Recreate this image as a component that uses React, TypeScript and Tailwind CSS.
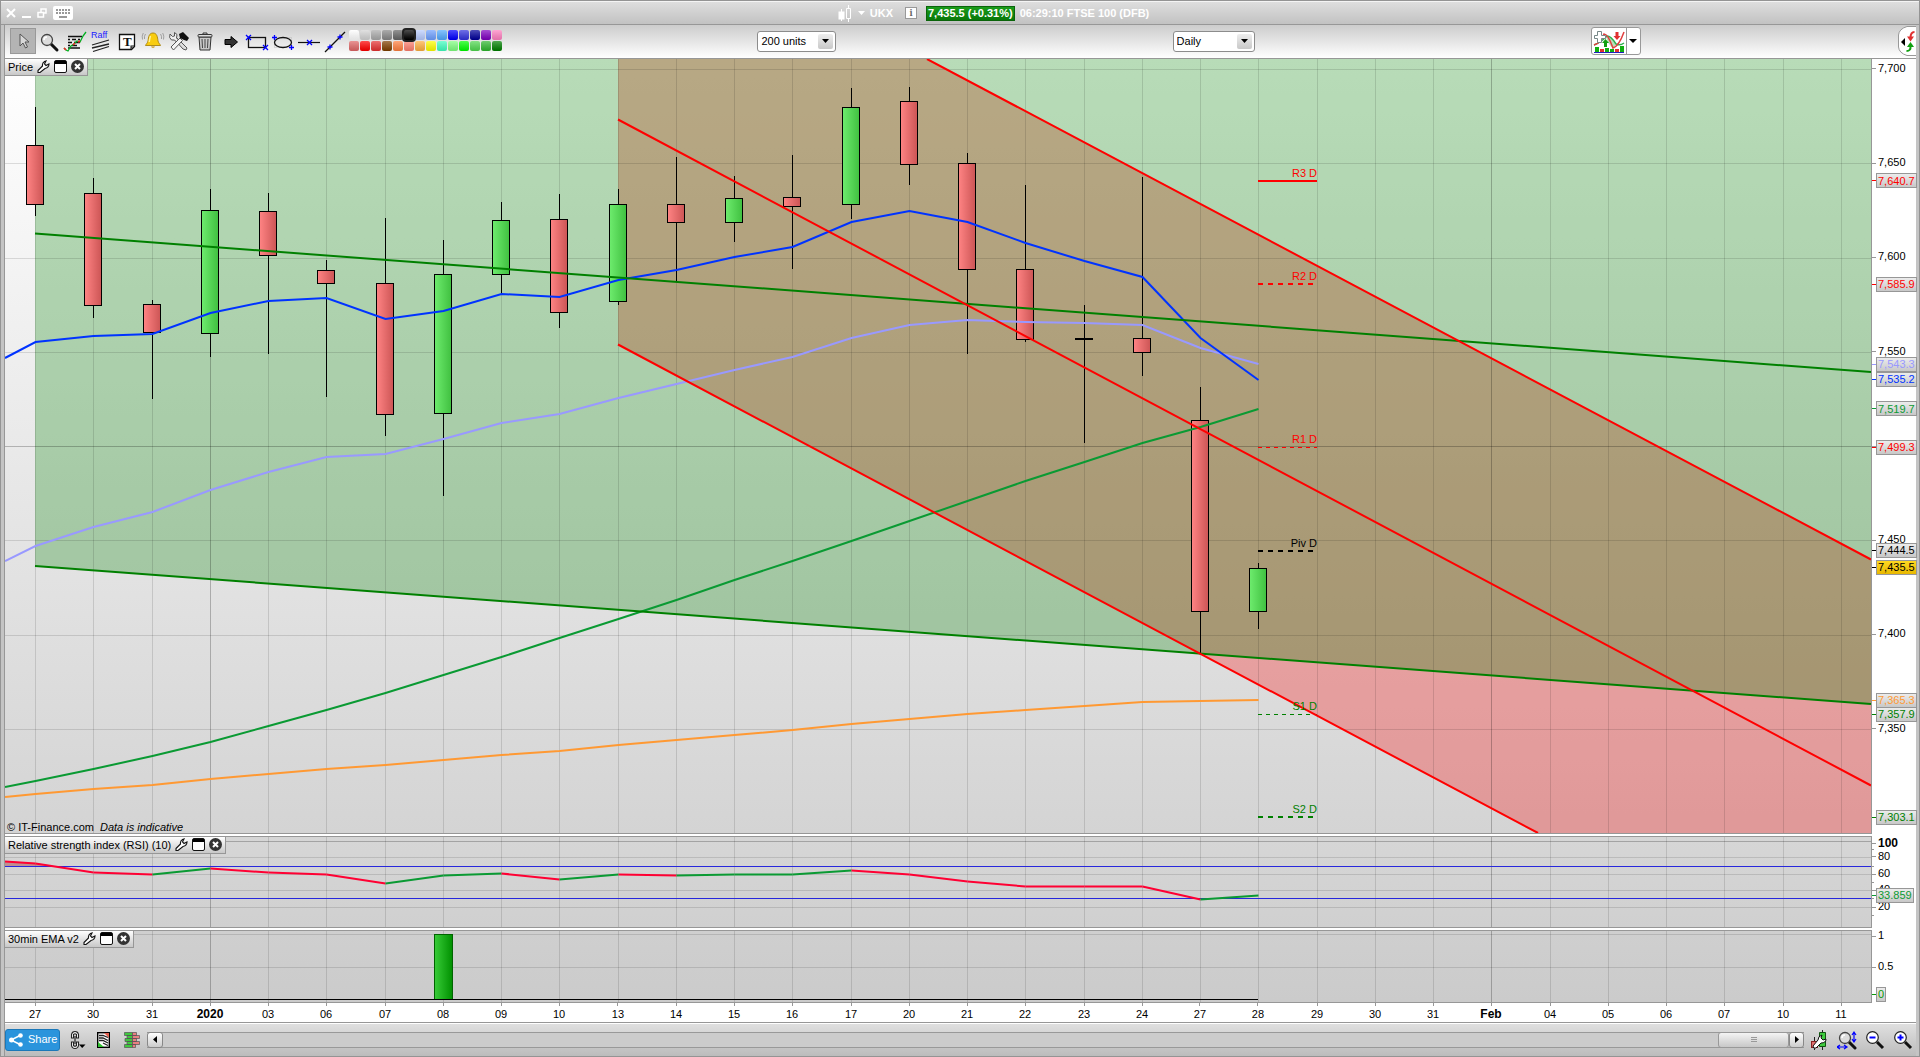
import React from 'react';
import { clsx } from 'clsx';

// Plot coordinates: every panel shares the same horizontal axis.
const LEFT = 5;
const WIDTH = 1866;
const PRICE_TOP = 59;
const PRICE_HEIGHT = 774;

const dates = [
    '27', '30', '31', '2020', '03', '06', '07', '08', '09', '10', '13', '14', '15', '16', '17', '20',
    '21', '22', '23', '24', '27', '28', '29', '30', '31', 'Feb', '04', '05', '06', '07', '10', '11',
];

const colX = (i: number) => Math.round(35.1 + 58.25 * i);
const priceY = (price: number) => 69 + (7700 - price) * 1.8855;
const pctX = (x: number) => `${((x - LEFT) / WIDTH) * 100}%`;
const isMajor = (label: string) => label === '2020' || label === 'Feb';

// high, body top, body bottom, low
type Candle = { y: [number, number, number, number]; up?: boolean };

const candles: Candle[] = [
    { y: [107, 145, 204, 216] },
    { y: [178, 193, 305, 318] },
    { y: [300, 304, 332, 399] },
    { y: [189, 210, 333, 357], up: true },
    { y: [193, 211, 255, 354] },
    { y: [260, 270, 283, 397] },
    { y: [218, 283, 414, 436] },
    { y: [240, 274, 413, 496], up: true },
    { y: [202, 220, 274, 295], up: true },
    { y: [194, 219, 312, 328] },
    { y: [189, 204, 301, 305], up: true },
    { y: [157, 204, 222, 281] },
    { y: [176, 198, 222, 242], up: true },
    { y: [155, 197, 206, 269] },
    { y: [88, 107, 204, 219], up: true },
    { y: [87, 101, 164, 185] },
    { y: [153, 163, 269, 354] },
    { y: [185, 269, 339, 342] },
    { y: [305, 338, 339, 443] },
    { y: [177, 338, 352, 376] },
    { y: [387, 420, 611, 653] },
    { y: [563, 568, 611, 629], up: true },
];

// first value sits on the left edge, the rest on the date columns
const averages = [
    { color: '#ff9933', y: [797, 794, 789, 785, 779, 774, 769, 765, 760, 755, 751, 745, 740, 735, 730, 724, 719, 714, 710, 706, 702, 701, 700] },
    { color: '#0a9a33', y: [787, 781, 769, 756, 742, 726, 710, 693, 675, 657, 638, 619, 600, 580, 561, 541, 521, 501, 481, 462, 443, 427, 409] },
    { color: '#9999ff', y: [561, 546, 527, 512, 490, 472, 457, 454, 439, 423, 414, 398, 384, 370, 357, 338, 325, 320, 322, 323, 325, 348, 364] },
    { color: '#0033ff', y: [358, 342, 336, 334, 313, 301, 298, 319, 311, 294, 297, 280, 270, 257, 247, 222, 211, 222, 243, 261, 277, 338, 380] },
];

const rsi = [861, 863, 872, 874, 868, 872, 874, 883, 875, 873, 879, 874, 875, 874, 874, 870, 874, 881, 886, 886, 886, 899, 895];
const rsiRising = [3, 7, 8, 10, 12, 13, 14, 21];

const priceMarks = [7700, 7650, 7600, 7550, 7500, 7450, 7400, 7350];

const priceTags = [
    { value: '7,640.7', text: 'text-[#ff0000]', tick: 'bg-[#ff0000]' },
    { value: '7,585.9', text: 'text-[#ff0000]', tick: 'bg-[#ff0000]' },
    { value: '7,543.3', text: 'text-[#9999ff]', tick: 'bg-[#9999ff]' },
    { value: '7,535.2', text: 'text-[#0033ff]', tick: 'bg-[#0033ff]' },
    { value: '7,519.7', text: 'text-[#0a9a33]', tick: 'bg-[#0a9a33]' },
    { value: '7,499.3', text: 'text-[#ff0000]', tick: 'bg-[#ff0000]' },
    { value: '7,444.5', text: 'text-black', tick: 'bg-black' },
    { value: '7,435.5', text: 'text-black', tick: 'bg-black', last: true },
    { value: '7,365.3', text: 'text-[#ff9933]', tick: 'bg-[#ff9933]' },
    { value: '7,357.9', text: 'text-[#008000]', tick: 'bg-[#008000]' },
    { value: '7,303.1', text: 'text-[#008000]', tick: 'bg-[#008000]' },
];

const pivots = [
    { name: 'R3 D', price: 7640.7, color: '#ff0000', text: 'text-[#ff0000]', width: 2 },
    { name: 'R2 D', price: 7585.9, color: '#ff0000', text: 'text-[#ff0000]', width: 2, dash: '5 5' },
    { name: 'R1 D', price: 7499.3, color: '#ff0000', text: 'text-[#ff0000]', width: 1, dash: '4 4' },
    { name: 'Piv D', price: 7444.5, color: '#000000', text: 'text-black', width: 2, dash: '5 5' },
    { name: 'S1 D', price: 7357.9, color: '#008000', text: 'text-[#008000]', width: 1, dash: '4 4' },
    { name: 'S2 D', price: 7303.1, color: '#008000', text: 'text-[#008000]', width: 2, dash: '5 5' },
];

const palette = [
    { name: 'White', bg: 'bg-white' },
    { name: 'Light gray', bg: 'bg-[#d4d4d4]' },
    { name: 'Gray', bg: 'bg-[#aaaaaa]' },
    { name: 'Medium gray', bg: 'bg-[#888888]' },
    { name: 'Dark gray', bg: 'bg-[#666666]' },
    { name: 'Black', bg: 'bg-black' },
    { name: 'Pale blue', bg: 'bg-[#b8ccff]' },
    { name: 'Light blue', bg: 'bg-[#6ea0ff]' },
    { name: 'Sky blue', bg: 'bg-[#52aaff]' },
    { name: 'Blue', bg: 'bg-[#0000ff]' },
    { name: 'Royal blue', bg: 'bg-[#3333dd]' },
    { name: 'Navy', bg: 'bg-[#000099]' },
    { name: 'Purple', bg: 'bg-[#8000c0]' },
    { name: 'Pink', bg: 'bg-[#ff80c0]' },
    { name: 'Rose', bg: 'bg-[#e06666]' },
    { name: 'Red', bg: 'bg-[#ff0000]' },
    { name: 'Brick', bg: 'bg-[#e63333]' },
    { name: 'Brown', bg: 'bg-[#804000]' },
    { name: 'Orange', bg: 'bg-[#ff8040]' },
    { name: 'Salmon', bg: 'bg-[#ff8070]' },
    { name: 'Amber', bg: 'bg-[#ffb040]' },
    { name: 'Yellow', bg: 'bg-[#ffff00]' },
    { name: 'Turquoise', bg: 'bg-[#40ffc0]' },
    { name: 'Light green', bg: 'bg-[#80ff80]' },
    { name: 'Lime', bg: 'bg-[#00ff00]' },
    { name: 'Fern', bg: 'bg-[#50d850]' },
    { name: 'Grass', bg: 'bg-[#30b830]' },
    { name: 'Green', bg: 'bg-[#008000]' },
];

const Cross = ({ x, y, plus }: { x: number; y: number; plus?: boolean }) => (
    <path
        d={plus ? `M${x - 2.5} ${y}h5M${x} ${y - 2.5}v5` : `M${x - 2.5} ${y - 2.5}l5 5m0 -5l-5 5`}
        stroke="#0000ff"
        strokeWidth="1.3"
    />
);

const Glass = () => (
    <>
        <path d="M12 12l6 6" stroke="#111" strokeWidth="3" strokeLinecap="round" />
        <circle cx="8" cy="8" r="5.5" fill="#dcdcdc" stroke="#444" strokeWidth="1.3" />
        <path d="M5 8a3 3 0 0 1 3-3" stroke="#fff" strokeWidth="1.5" />
    </>
);

const tools: { label: string; icon: React.ReactNode }[] = [
    {
        label: 'Select',
        icon: <path d="M8 4v12l3-3 2.5 5 2-1-2.5-5h4z" fill="#d8d8d8" stroke="#555" />,
    },
    { label: 'Zoom', icon: <g transform="translate(1 2)"><Glass /></g> },
    {
        label: 'Indicators',
        icon: (
            <>
                <path d="M4 6.5h14M4 9.5h2m2 0h4m2 0h2M4 12.5h4m2 0h6M4 15.5h2m2 0h5M4 18h12" stroke="#111" strokeWidth="1.3" />
                <path d="M0 18l2 2 2 1 3-5 3-2 3-3 3 1 3-6 3-4" stroke="#00b020" strokeWidth="1.3" />
                <path d="M0 18l2 2M9 15l2-2m3-1l2-1" stroke="#f02020" strokeWidth="1.5" />
            </>
        ),
    },
    {
        label: 'Raff channel',
        icon: (
            <>
                <text x="1" y="8" fontSize="9" fill="#1a1aff" fontFamily="Liberation Sans, Arial, sans-serif">Raff</text>
                <path d="M2 15l17-5M2 18l17-4M3 21.5l16-5" stroke="#222" strokeWidth="1.3" />
            </>
        ),
    },
    {
        label: 'Text',
        icon: (
            <>
                <path d="M3.5 4.500h15v12l-3 3h-12z" fill="#fff" stroke="#111" strokeWidth="1.3" />
                <path d="M18.5 15.5h-4v4z" fill="#111" />
                <path d="M15.500 17.5v-1h2z" fill="#fff" />
                <text x="7" y="16" fontSize="13" fontWeight="bold" fill="#111" fontFamily="Liberation Serif, Times New Roman, serif">T</text>
            </>
        ),
    },
    {
        label: 'Alert',
        icon: (
            <>
                <path d="M11 3c-4 0-4.5 4-5 8-.4 2-2 3-2.5 4.500h15c-.5-1.5-2-2.500-2.500-4.500-.5-4-1-8-5-8z" fill="#f8cc10" stroke="#a07800" strokeWidth=".8" />
                <path d="M8.5 6c-.8 2-1 4-1.3 6" stroke="#fff3a0" strokeWidth="1.5" />
                <path d="M9 16.5a2.2 2.2 0 0 0 4 0z" fill="#c89000" />
                <path d="M3.5 4Q2 6 2.5 9M1.3 3Q-.5 6 .5 9.5M18.500 4Q20 6 19.500 9M20.700 3Q22.500 6 21.500 9.500" stroke="#999" strokeWidth=".9" />
            </>
        ),
    },
    {
        label: 'Drawing settings',
        icon: (
            <>
                <path d="M6 9l9 10 3 1 1-2L9 8z" fill="#ddd" stroke="#555" />
                <path d="M2 4q-1.500 4 1.500 6h3l2 2 2-2-2-2 .5-3.500L6.500 2.500V6L4.500 6.500z" fill="#eee" stroke="#555" />
                <path d="M12 8l-9 9 2.500 3 9-9.500z" fill="#f4f4f4" stroke="#555" />
                <path d="M11 4l4-2 6 6-2 3-3-1-4-2z" fill="#111" />
            </>
        ),
    },
    {
        label: 'Delete',
        icon: (
            <>
                <path d="M5 7h12l-1 13H6z" fill="#c8c8c8" stroke="#333" />
                <path d="M8 9l.5 9M11 9v9M14 9l-.5 9" stroke="#444" />
                <rect x="4" y="4.5" width="14" height="2.5" rx="1" fill="#ddd" stroke="#333" />
                <path d="M9 4V3h4v1" stroke="#333" />
            </>
        ),
    },
    {
        label: 'Arrow',
        icon: <path d="M5 9.500h6V6.500l6.500 5.500-6.500 5.500v-3H5z" fill="#333" stroke="#000" />,
    },
    {
        label: 'Rectangle',
        icon: (
            <>
                <rect x="2.5" y="7.5" width="17" height="10" stroke="#111" strokeWidth="1.3" />
                <Cross x={2.5} y={7.5} />
                <Cross x={19.5} y={17.5} />
            </>
        ),
    },
    {
        label: 'Ellipse',
        icon: (
            <>
                <rect x="2.5" y="7.5" width="17" height="10" stroke="#aaa" strokeDasharray="1 1" strokeWidth=".7" />
                <ellipse cx="11" cy="12.5" rx="8.5" ry="5" stroke="#111" strokeWidth="1.3" />
                <Cross x={2.5} y={7.5} plus />
                <Cross x={19.5} y={17.5} plus />
            </>
        ),
    },
    {
        label: 'Horizontal line',
        icon: (
            <>
                <path d="M0 12.5h22" stroke="#111" strokeWidth="1.2" />
                <Cross x={11.5} y={12.5} />
            </>
        ),
    },
    {
        label: 'Trend line',
        icon: (
            <>
                <path d="M1 22L21 2" stroke="#111" strokeWidth="1.2" />
                <Cross x={6} y={17} plus />
                <Cross x={16} y={7} plus />
            </>
        ),
    },
];

const TitleBar = () => (
    <header className="relative flex h-6 shrink-0 items-center justify-center border-t border-b border-t-[#f4f4f4] border-b-[#979797] bg-linear-to-b from-[#dedede] to-[#c2c2c2] text-[11px] font-bold text-white">
        <div className="absolute inset-y-0 left-[5px] flex items-center gap-[6px]">
            <button aria-label="Close window">
                <svg width="10" height="10" fill="none" stroke="#fff" strokeWidth="2"><path d="M1 1l8 8M9 1l-8 8" /></svg>
            </button>
            <button aria-label="Minimize window">
                <svg width="9" height="10" fill="none" stroke="#fff" strokeWidth="2"><path d="M0 9h9" /></svg>
            </button>
            <button aria-label="Restore window">
                <svg width="10" height="10" fill="none" stroke="#fff" strokeWidth="1.5"><path d="M4 4V1h5v4H7M1 4.5h5.5V9H1z" /></svg>
            </button>
            <button aria-label="Keyboard">
                <svg width="20" height="14">
                    <rect width="20" height="14" rx="2" fill="#fff" />
                    <path d="M3 4h14M3 7h14" stroke="#999" strokeWidth="2" strokeDasharray="2 1" />
                    <path d="M6 11h8" stroke="#999" strokeWidth="2" />
                </svg>
            </button>
        </div>
        <div className="flex items-center pl-[67px]">
            <svg width="16" height="18" fill="none" stroke="#fff">
                <path d="M3.5 5v12M10.5 1v3M10.5 15v3" />
                <rect x="1" y="8" width="5" height="7" fill="#fff" />
                <path d="M8.5 4.5h4v10h-4z" />
            </svg>
            <svg className="ml-1" width="8" height="5"><path d="M0 0h7L3.5 4z" fill="#fff" /></svg>
            <span className="ml-1">UKX</span>
            <span className="ml-3 flex h-3 w-3 items-center justify-center border border-[#999] bg-white font-serif text-[10px] leading-none text-[#666]">i</span>
            <span className="ml-[9px] flex h-[15px] items-center border border-[#0a640a] bg-linear-to-b from-[#1a9c1a] to-[#087808] px-px">7,435.5 (+0.31%)</span>
            <span className="ml-[5px]">06:29:10</span>
            <span className="ml-[3px]">FTSE 100 (DFB)</span>
        </div>
    </header>
);

const Dropdown = ({ id, label, value, width }: { id: string; label: string; value: string; width: string }) => (
    <div className={clsx('relative', width)}>
        <label htmlFor={id} className="sr-only">{label}</label>
        <select id={id} defaultValue={value} className="block h-[21px] w-full appearance-none rounded-[3px] border border-[#8c8c8c] bg-white pl-[3px] text-[11px] leading-[15px] text-black">
            <option>{value}</option>
        </select>
        <span className="pointer-events-none absolute inset-y-[3px] right-[3px] flex w-[15px] items-center justify-center rounded-xs bg-linear-to-b from-[#eeeeee] to-[#c8c8c8]">
            <svg width="7" height="4"><path d="M0 0h7L3.5 4z" /></svg>
        </span>
    </div>
);

const Toolbar = () => (
    <div className="grid h-[34px] shrink-0 grid-cols-[752fr_415fr_418fr_325fr] items-center border-b border-[#979797] bg-linear-to-b from-[#cccccc] to-white pb-px">
        <div className="flex items-center pb-px pl-[5px]">
            {tools.map((tool, i) => (
                <button
                    key={tool.label}
                    aria-label={tool.label}
                    className={clsx('flex h-[26px] w-[26px] items-center justify-center', i === 0 && 'border border-[#999] bg-[#b4b4b4]')}
                >
                    <svg width="22" height="22" viewBox="0 0 22 22" fill="none" className="shrink-0 overflow-visible">{tool.icon}</svg>
                </button>
            ))}
            <div className="ml-px grid grid-cols-14 gap-px">
                {palette.map((c) => (
                    <button
                        key={c.name}
                        aria-label={c.name}
                        className={clsx('h-[10px] w-[10px] rounded-xs bg-linear-to-b from-white/30 to-black/10', c.bg, c.name === 'Black' && 'relative ring-2 ring-[#222]')}
                    />
                ))}
            </div>
        </div>
        <Dropdown id="units" label="Units" value="200 units" width="w-[79px]" />
        <Dropdown id="timeframe" label="Time frame" value="Daily" width="w-[82px]" />
        <div className="flex items-center justify-between">
            <div className="flex h-7 w-[50px] overflow-hidden rounded-[3px] border border-[#999] bg-white">
                <button aria-label="Add indicator" className="flex w-[35px] items-center justify-center border-r border-[#999]">
                    <svg width="32" height="24" viewBox="0 0 32 24" fill="none">
                        <path d="M13 8q6 0 10 8l-3 3q-4-2-7-11z" fill="#b8e0b8" />
                        <path d="M1 16Q7 14 14 7q4 0 9 8 4 2 8-1" stroke="#30b050" strokeWidth="1.5" />
                        <path d="M1 16Q8 14 11 5q4 0 9 14 6-2 11-16" stroke="#e04040" strokeWidth="1.5" />
                        <path d="M4.5 2.5h4v4h4v3h-4v4h-4v-4h-3v-3h3z" fill="#fff" stroke="#788" />
                        <path d="M22.500 3v4h-2l3.500 4 3.500-4h-2V3z" fill="#e03030" />
                        <path d="M11 18v-4H9l3.500-4 3.500 4h-2v4z" fill="#10a010" />
                        <path d="M2 18h4v5H2zM12 19h4v4h-4zM17 20h4v3h-4zM27 17h4v6h-4z" fill="#10b010" />
                        <path d="M7 20h4v3H7zM22 20h4v3h-4z" fill="#e03030" />
                        <path d="M1 23.5h30" stroke="#2020c0" />
                    </svg>
                </button>
                <button aria-label="More indicators" className="flex flex-1 items-center justify-center">
                    <svg width="8" height="4"><path d="M0 0h8L4 4z" /></svg>
                </button>
            </div>
            <button aria-label="Open order panel">
                <svg width="18" height="30" fill="none">
                    <path d="M18 .5H9Q1 3 .5 9v12q.5 6 8.500 8.500h9" fill="#fff" stroke="#999" />
                    <path d="M7 12v8l-4-4z" fill="#000" />
                    <path d="M16.500 6q-4 0-4 6" stroke="#e03030" strokeWidth="2" />
                    <path d="M9 10.500h7l-3.500 5z" fill="#e03030" />
                    <path d="M8.500 25q4.500 0 4-5" stroke="#10a010" strokeWidth="2" />
                    <path d="M9 21h7l-3.500-5z" fill="#10a010" />
                </svg>
            </button>
        </div>
    </div>
);

const PanelTab = ({ title }: { title: string }) => (
    <div className="absolute top-0 left-0 flex h-[17px] items-center border-r border-b border-[#979797] bg-linear-to-b from-white to-[#c8c8c8] pr-[3px] pb-px pl-[3px]">
        <h2 className="text-[11px] leading-[14px] whitespace-nowrap">{title}</h2>
        <button aria-label={`${title} settings`} className="ml-1">
            <svg width="13" height="13" fill="none">
                <path d="M1 10.5l4.500-4.500q-.5-3 2-4.500l1.500-.5-1.500 3 1.500 1.500 3-1.500q0 3.500-4 4.500L3 12.500H1z" fill="#fff" stroke="#111" strokeWidth="1.1" />
            </svg>
        </button>
        <button aria-label={`Detach ${title}`} className="ml-1">
            <svg width="13" height="13"><rect x=".5" y=".5" width="12" height="12" rx="1.5" fill="#fff" stroke="#111" /><path d="M1 1h11v3H1z" /></svg>
        </button>
        <button aria-label={`Close ${title}`} className="ml-1">
            <svg width="13" height="13"><circle cx="6.5" cy="6.5" r="6.5" fill="#333" /><path d="M4 4l5 5M9 4l-5 5" stroke="#fff" strokeWidth="2" /></svg>
        </button>
    </div>
);

const Grid = ({ top, height, lines, strong }: { top: number; height: number; lines: number[]; strong?: number }) => (
    <g shapeRendering="crispEdges" stroke="#000">
        {dates.map((d, i) => (
            <path key={i} d={`M${colX(i) + 0.5} ${top}v${height}`} strokeOpacity={isMajor(d) ? 0.24 : 0.12} />
        ))}
        {lines.map((y) => (
            <path key={y} d={`M${LEFT} ${y + 0.5}h${WIDTH}`} strokeOpacity={y === strong ? 0.24 : 0.12} />
        ))}
    </g>
);

const linePath = (ys: number[]) => ys.map((y, i) => `${i ? 'L' : 'M'}${i ? colX(i - 1) + 0.5 : LEFT} ${y}`).join('');

const Tag = ({ y, top, height, text, tick, children, last }: {
    y: number; top: number; height: number; text: string; tick: string; children: React.ReactNode; last?: boolean;
}) => (
    <div className="absolute left-0 flex h-0 items-center" style={{ top: `${((y - top) / height) * 100}%` }}>
        <span className={clsx('h-px w-1 shrink-0', tick)} />
        <span className={clsx('flex h-[15px] items-center border border-[#979797] bg-linear-to-b px-px text-[11px]', text, last ? 'from-[#ffd820] to-[#e8b800]' : 'from-[#ececec] to-[#c8c8c8]')}>
            {children}
        </span>
    </div>
);

const Mark = ({ y, top, height, children, bold }: {
    y: number; top: number; height: number; children: React.ReactNode; bold?: boolean;
}) => (
    <div className="absolute left-0 flex h-0 items-center" style={{ top: `${((y - top) / height) * 100}%` }}>
        <span className="h-px w-1 shrink-0 bg-[#979797]" />
        <span className={clsx('pl-[2px]', bold ? 'text-xs font-bold' : 'pb-[2px] text-[11px]')}>{children}</span>
    </div>
);

const PricePanel = () => (
    <section className="flex min-h-0 flex-1">
        <div className="relative flex-1 border-r border-b border-[#979797] bg-linear-to-b from-white to-[#d4d4d4]">
            <svg className="absolute inset-0 h-full w-full" viewBox={`${LEFT} ${PRICE_TOP} ${WIDTH} ${PRICE_HEIGHT}`} preserveAspectRatio="none" fill="none">
                <defs>
                    <linearGradient id="up"><stop stopColor="#6eec6e" /><stop offset="1" stopColor="#40c040" /></linearGradient>
                    <linearGradient id="down"><stop stopColor="#ff8484" /><stop offset="1" stopColor="#cc5555" /></linearGradient>
                </defs>
                <path d="M618 59H927L1871 559.5V833H1538L618 344.5z" fill="#ff0000" fillOpacity=".28" />
                <path d="M35 59H1871V704L35 566z" fill="#008000" fillOpacity=".28" />
                <Grid top={PRICE_TOP} height={PRICE_HEIGHT} lines={[69, 163, 258, 352, 446, 540, 635, 729]} strong={446} />

                {candles.map(({ y: [high, top, bottom, low], up }, i) => (
                    <g key={i} shapeRendering="crispEdges" stroke="#000">
                        <path d={`M${colX(i) + 0.5} ${high}V${low}`} />
                        <rect x={colX(i) - 8.5} y={top + 0.5} width="17" height={bottom - top} fill={up ? 'url(#up)' : 'url(#down)'} />
                    </g>
                ))}
                {averages.map((a) => (
                    <path key={a.color} d={linePath(a.y)} stroke={a.color} strokeWidth="2" />
                ))}
                {pivots.map((p) => (
                    <path key={p.name} d={`M1258 ${Math.round(priceY(p.price)) + (p.width === 1 ? 0.5 : 0)}h59`} stroke={p.color} strokeWidth={p.width} strokeDasharray={p.dash} shapeRendering="crispEdges" />
                ))}
                <path d="M35 233.5L1871 372M35 566L1871 704" stroke="#008000" strokeWidth="2" />
                <path d="M927 59L1871 559.5M618 119.5L1871 785.5M618 344.5L1538 833" stroke="#ff0000" strokeWidth="2" />
            </svg>
            {pivots.map((p) => (
                <div
                    key={p.name}
                    className={clsx('absolute flex h-0 w-0 items-end justify-end text-[11px] leading-[15px] whitespace-nowrap', p.text)}
                    style={{ left: pctX(1317), top: `${((priceY(p.price) - PRICE_TOP) / PRICE_HEIGHT) * 100}%` }}
                >
                    {p.name}
                </div>
            ))}
            <PanelTab title="Price" />
            <p className="absolute bottom-0 left-[2px] flex gap-[6px] text-[11px] leading-3">
                <span>© IT-Finance.com</span>
                <em>Data is indicative</em>
            </p>
        </div>
        <div className="relative mb-px w-11">
            {priceMarks.map((p) => (
                <Mark key={p} y={priceY(p)} top={PRICE_TOP} height={PRICE_HEIGHT}>{p.toLocaleString('en-US')}</Mark>
            ))}
            {priceTags.map((t) => (
                <Tag key={t.value} y={priceY(Number(t.value.replace(',', '')))} top={PRICE_TOP} height={PRICE_HEIGHT} text={t.text} tick={t.tick} last={t.last}>
                    {t.value}
                </Tag>
            ))}
        </div>
    </section>
);

const RsiPanel = () => (
    <section className="mt-[2px] flex h-[92px] shrink-0">
        <div className="relative flex-1 border-y border-r border-[#979797] bg-linear-to-b from-[#d6d6d6] to-[#d0d0d0]">
            <svg className="absolute inset-0 h-full w-full" viewBox={`${LEFT} 837 ${WIDTH} 90`} preserveAspectRatio="none" fill="none">
                <Grid top={837} height={90} lines={[841, 857, 874, 890, 907]} strong={841} />
                <path d="M5 861L35 863L54 866H5z" fill="#b06060" fillOpacity=".6" />
                <path d="M5 866.5H1871M5 898.5H1871" stroke="#2828dc" shapeRendering="crispEdges" />
                {rsi.slice(1).map((y, i) => (
                    <path
                        key={i}
                        d={`M${i ? colX(i - 1) + 0.5 : LEFT} ${rsi[i] + 0.5}L${colX(i) + 0.5} ${y + 0.5}`}
                        stroke={rsiRising.includes(i) ? '#0a9a33' : '#ff0033'}
                        strokeWidth="2"
                    />
                ))}
            </svg>
            <PanelTab title="Relative strength index (RSI) (10)" />
        </div>
        <div className="relative my-px w-11">
            {[849, 866, 882, 898, 915].map((y) => (
                <span key={y} className="absolute left-0 h-px w-[2px] bg-[#979797]" style={{ top: `${((y - 837) / 90) * 100}%` }} />
            ))}
            <Mark y={843} top={837} height={90} bold>100</Mark>
            <Mark y={857} top={837} height={90}>80</Mark>
            <Mark y={874} top={837} height={90}>60</Mark>
            <Mark y={890} top={837} height={90}>40</Mark>
            <Mark y={907} top={837} height={90}>20</Mark>
            <Tag y={895} top={837} height={90} text="text-[#0a9a33]" tick="bg-[#0a9a33]">33.859</Tag>
        </div>
    </section>
);

const EmaPanel = () => (
    <section className="mt-[2px] flex h-[73px] shrink-0">
        <div className="relative flex-1 border-y border-r border-[#979797] bg-linear-to-b from-[#cfcfcf] to-[#cbcbcb]">
            <svg className="absolute inset-0 h-full w-full" viewBox={`${LEFT} 931 ${WIDTH} 71`} preserveAspectRatio="none" fill="none">
                <defs>
                    <linearGradient id="bar"><stop stopColor="#38cc38" /><stop offset="1" stopColor="#009000" /></linearGradient>
                </defs>
                <Grid top={931} height={71} lines={[934, 967]} />
                <rect x="434.5" y="934.5" width="18" height="65" fill="url(#bar)" stroke="#006400" shapeRendering="crispEdges" />
                <path d="M5 999.5H1258" stroke="#000" shapeRendering="crispEdges" />
            </svg>
            <PanelTab title="30min EMA v2" />
        </div>
        <div className="relative my-px w-11">
            <Mark y={936} top={931} height={71}>1</Mark>
            <Mark y={967} top={931} height={71}>0.5</Mark>
            <Tag y={994} top={931} height={71} text="text-[#0a9a0a]" tick="bg-[#0a9a0a]">0</Tag>
        </div>
    </section>
);

const DateAxis = () => (
    <div className="h-5 shrink-0 border-b border-[#979797] pr-[45px]">
        <div className="relative h-full">
            {dates.map((d, i) => (
                <div key={i} className="absolute top-0 flex w-0 flex-col items-center" style={{ left: pctX(colX(i)) }}>
                    <span className="h-[3px] w-px bg-[#979797]" />
                    <span className={isMajor(d) ? 'text-xs leading-4 font-bold' : 'text-[11px] leading-4'}>{d}</span>
                </div>
            ))}
        </div>
    </div>
);

const BottomBar = () => (
    <footer className="flex h-[33px] shrink-0 items-center border-t border-white bg-linear-to-b from-[#e0e0e0] to-[#bcbcbc] pb-px">
        <button className="flex h-[22px] w-[55px] items-center gap-[5px] rounded-[3px] border border-[#1c78b8] bg-[#2a94dc] pl-[3px] text-[11px] text-white">
            <svg width="14" height="14" viewBox="0 0 14 14" fill="#fff">
                <path d="M12 2L2 7l10 5" fill="none" stroke="#fff" strokeWidth="1.5" />
                <circle cx="2.5" cy="7" r="2.5" />
                <circle cx="11.5" cy="2.5" r="2.3" />
                <circle cx="11.5" cy="11.5" r="2.3" />
            </svg>
            Share
        </button>
        <button aria-label="Link windows" className="ml-[10px]">
            <svg width="16" height="20" viewBox="0 0 16 20" fill="none">
                <path d="M1.5 8V4.500Q2 1.5 5 1.5T8.500 4.500V8H6.500V4.500Q5 3 3.500 4.500V8zM1.500 12v3.500q.5 3 3.500 3t3.500-3V12H6.500v3.500q-1.500 1.500-3 0V12z" fill="#fff" stroke="#222" strokeWidth="1.1" />
                <path d="M5 6v8" stroke="#222" strokeWidth="1.2" />
                <path d="M9 14.500h6.500L12.200 18z" fill="#000" />
            </svg>
        </button>
        <button aria-label="Order book" className="ml-[11px]">
            <svg width="13" height="16" viewBox="0 0 13 16" fill="none">
                <rect x=".7" y=".7" width="11.6" height="14.6" fill="#fff" stroke="#000" strokeWidth="1.4" />
                <path d="M7 1h5v5z" fill="#e06050" />
                <path d="M1 15v-5l6 5z" fill="#30c030" />
                <path d="M2 3.500h4l5 2M2 6h4l5 2.500M2 8.500h4l5 2.500M6 11l5 2.500" stroke="#222" strokeWidth="1.3" />
            </svg>
        </button>
        <button aria-label="Market depth" className="ml-[14px]">
            <svg width="16" height="16" viewBox="0 0 16 16" stroke="#555" strokeWidth=".7">
                <path d="M.5 .5h8v3h-8zM3 3.500h5.500v3H3zM1 6.500h7.500v3H1zM3 9.500h5.500v3H3zM.5 12.500h8v3h-8z" fill="#40c840" />
                <path d="M8.500 .5h4v3h-4zM8.500 3.500h7v3h-7zM8.500 6.500h4v3h-4zM8.500 9.500h7v3h-7zM8.500 12.500h3v3h-3z" fill="#e88080" />
            </svg>
        </button>
        <div className="ml-[7px] flex h-4 flex-1 border-y border-[#999] bg-[#cccccc]">
            <button aria-label="Scroll left" className="-my-px flex w-4 items-center justify-center rounded-[3px] border border-[#888] bg-linear-to-b from-white to-[#cccccc]">
                <svg width="4" height="7"><path d="M4 0v7L0 3.500z" /></svg>
            </button>
            <div className="flex flex-1 justify-end">
                <div className="-my-px flex w-[71px] flex-col items-center justify-center gap-px rounded-[3px] border border-[#999] bg-linear-to-b from-[#f4f4f4] to-[#c8c8c8]">
                    <span className="h-px w-[6px] bg-[#999]" />
                    <span className="h-px w-[6px] bg-[#999]" />
                    <span className="h-px w-[6px] bg-[#999]" />
                </div>
            </div>
            <button aria-label="Scroll right" className="-my-px flex w-[15px] items-center justify-center rounded-[3px] border border-[#888] bg-linear-to-b from-white to-[#cccccc]">
                <svg width="4" height="7"><path d="M0 0v7l4-3.500z" /></svg>
            </button>
        </div>
        <div className="flex items-center gap-2 pr-[3px] pl-[7px]">
            <button aria-label="Chart settings">
                <svg width="18" height="20" viewBox="0 0 18 20" fill="none">
                    <path d="M3.5 7v13M11.500 0v20" stroke="#222" />
                    <rect x=".5" y="11.5" width="6" height="6" fill="#e07070" stroke="#822" />
                    <path d="M8.500 2.500h6v14h-6z" fill="#40cc40" stroke="#151" />
                    <path d="M2 16l5-6q0-4 4-5l-1 3 2 2 3-1q0 4-5 4l-5 5q-3 1-3-2z" fill="#fff" stroke="#111" />
                </svg>
            </button>
            <button aria-label="Auto zoom">
                <svg width="20" height="20" viewBox="0 0 20 20" fill="none">
                    <Glass />
                    <path d="M17 3v8M15 5l2-3 2 3M15 9l2 3 2-3M1 17h8M3 15l-3 2 3 2M7 15l3 2-3 2" stroke="#0000ff" strokeWidth="1.2" />
                </svg>
            </button>
            <button aria-label="Zoom out">
                <svg width="20" height="20" viewBox="0 0 20 20" fill="none">
                    <path d="M12 12l6 6" stroke="#111" strokeWidth="3" />
                    <circle cx="7.5" cy="7.5" r="5.8" fill="#fff" stroke="#222" strokeWidth="1.2" />
                    <path d="M4.5 7.5h6" stroke="#0000ff" strokeWidth="2" />
                </svg>
            </button>
            <button aria-label="Zoom in">
                <svg width="20" height="20" viewBox="0 0 20 20" fill="none">
                    <path d="M12 12l6 6" stroke="#111" strokeWidth="3" />
                    <circle cx="7.5" cy="7.5" r="5.8" fill="#fff" stroke="#222" strokeWidth="1.2" />
                    <path d="M4.5 7.5h6M7.5 4.500v6" stroke="#0000ff" strokeWidth="2" />
                </svg>
            </button>
        </div>
    </footer>
);

export default function App() {
    return (
        <div className="flex h-screen flex-col border border-[#949494] bg-[#c4c4c4] font-['Liberation_Sans',Arial,sans-serif] text-black">
            <TitleBar />
            <main className="flex min-h-0 flex-1 flex-col border-r-[3px] border-l-[3px] border-[#c4c4c4]">
                <div className="flex min-h-0 flex-1 flex-col border-l border-[#979797] bg-white">
                    <Toolbar />
                    <PricePanel />
                    <RsiPanel />
                    <EmaPanel />
                    <DateAxis />
                    <BottomBar />
                </div>
            </main>
        </div>
    );
}
